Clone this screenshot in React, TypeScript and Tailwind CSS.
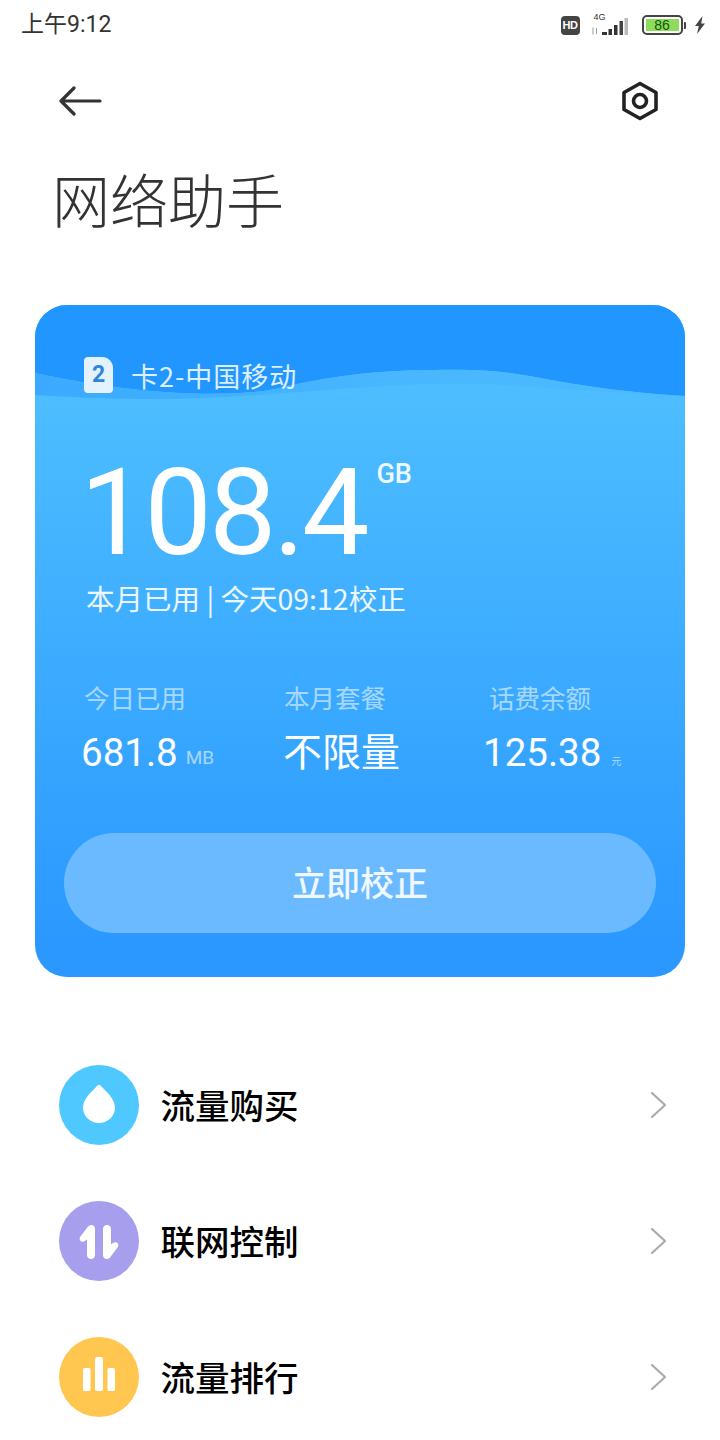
const ROWS = [
  { label: "流量购买", color: "bg-[#4FC8FF]", icon: "drop" },
  { label: "联网控制", color: "bg-[#A79EEE]", icon: "arrows" },
  { label: "流量排行", color: "bg-[#FFC650]", icon: "bars" },
];

const ARROW_PATH =
  "M32 24c2.500 0 4 1.600 4 4v26c0 2.400-1.800 4-4 4s-4-1.600-4-4V38.500l-2 1.500c-1.600 1.200-3.800 1-4.800-.6-1-1.500-.6-3.300.8-4.600L29 25.500c.9-1 1.900-1.500 3-1.500z";

function RowIcon({ icon }: { icon: string }) {
  if (icon === "drop") {
    return (
      <svg width="80" height="80" viewBox="0 0 80 80" fill="#fff">
        <path d="M40 20c1 0 1.800.6 2.500 1.400 3.500 3.900 13.500 12 13.500 21.100C56 51.100 49 58 40 58s-16-6.900-16-15.500c0-9.100 10-17.200 13.500-21.100.7-.8 1.500-1.400 2.500-1.400z" />
      </svg>
    );
  }
  if (icon === "arrows") {
    return (
      <svg width="80" height="80" viewBox="0 0 80 80" fill="#fff">
        <path d={ARROW_PATH} />
        <path d={ARROW_PATH} transform="rotate(180 40 41)" />
      </svg>
    );
  }
  return (
    <svg width="80" height="80" viewBox="0 0 80 80" fill="#fff">
      <rect x="24" y="31" width="7.500" height="23" rx="1.500" />
      <rect x="36" y="20" width="8" height="34" rx="2" />
      <rect x="48.500" y="31" width="7.500" height="23" rx="1.500" />
    </svg>
  );
}

function StatusIcons() {
  return (
    <div className="flex items-center">
      <div className="flex h-[19px] w-[19px] items-center justify-center rounded-[4px] bg-[#444] font-['Liberation_Sans',sans-serif] text-[11px] font-bold tracking-[-0.5px] text-white">
        HD
      </div>
      <div className="relative ml-[12px] h-[24px] w-[38px]">
        <span className="absolute left-[2px] top-[-2px] font-['Liberation_Sans',sans-serif] text-[9px] leading-[12px] text-[#333]">
          4G
        </span>
        <svg width="38" height="24" viewBox="0 0 38 24" className="absolute inset-0">
          <path d="M1 14.500v7M4.500 15v6" stroke="#999" strokeWidth="1" />
          <path d="M10 21v-1h5v3h-5zM16.500 23v-6h3.500v6zM22 23v-10h3.500v10z" fill="#333" transform="translate(0 -1)" />
          <rect x="27.500" y="8" width="3.500" height="14" fill="#444" />
          <rect x="32.500" y="5" width="3.500" height="17" fill="#bbb" />
        </svg>
      </div>
      <div className="ml-[12px] flex h-[20px] w-[41px] items-center rounded-[5px] border-[2.500px] border-[#444] p-[2px]">
        <div className="flex h-full w-full items-center justify-center bg-[#8FDC5A] font-['Liberation_Sans',sans-serif] text-[14px] leading-none text-[#0c5a10]">
          86
        </div>
      </div>
      <div className="ml-[1px] h-[7px] w-[2.500px] rounded-r-[1px] bg-[#444]" />
      <svg width="12" height="18" viewBox="0 0 12 18" fill="#444" className="ml-[8px]">
        <path d="M8.500 0 1 10h3.800L3 18l8-10.500H7.200z" />
      </svg>
    </div>
  );
}

export default function App() {
  return (
    <div className="h-[1440px] w-[720px] overflow-hidden bg-white font-['Noto_Sans_CJK_SC','Noto_Sans',sans-serif]">
      <div className="flex h-[50px] items-center justify-between pl-[21px] pr-[14px]">
        <span className="font-['Roboto','Noto_Sans_CJK_SC',sans-serif] text-[23px] text-[#333]">上午9:12</span>
        <StatusIcons />
      </div>

      <div className="mt-[22px] flex h-[58px] items-center justify-between pl-[59px] pr-[61px]">
        <svg width="44" height="30" viewBox="0 0 44 30" fill="none" stroke="#333" strokeWidth="3.200" strokeLinecap="round" strokeLinejoin="round">
          <path d="M41 15H3M15 2 2 15l13 13" />
        </svg>
        <svg width="38" height="40" viewBox="0 0 38 40" fill="none" stroke="#222" strokeWidth="3.600" strokeLinejoin="round">
          <path d="M19 2.500 35 11.500v17L19 37.500 3 28.500v-17z" />
          <circle cx="19" cy="20" r="6.500" />
        </svg>
      </div>

      <h1 className="ml-[52px] mt-[25px] text-[58px] font-light leading-[86px] text-[#333]">网络助手</h1>

      <div className="relative mx-[35px] mt-[64px] h-[672px] overflow-hidden rounded-[32px] bg-linear-to-b from-[#4DBDFF] from-[14%] to-[#2A98FF] to-[95%]">
        <svg width="650" height="100" viewBox="0 0 650 100" className="absolute left-0 top-0">
          <defs>
            <linearGradient id="midWave" x1="0" y1="0" x2="1" y2="0">
              <stop offset="0" stopColor="#3BA9FF" />
              <stop offset="0.55" stopColor="#48B7FF" />
              <stop offset="1" stopColor="#4BBAFF" />
            </linearGradient>
          </defs>
          <path d="M0 0H650V91C600 88 550 82 500 72 470 66 440 64 400 65 340 65 290 72 240 84 200 92 110 92 0 68z" fill="#2196FF" />
          <path d="M0 68C110 92 200 92 240 84 290 72 340 65 400 65 440 64 470 66 500 72 550 82 600 88 650 91 600 90 540 84 470 80 400 76 330 82 250 88 170 95 100 96 0 90z" fill="url(#midWave)" />
        </svg>

        <div className="relative flex h-full flex-col pl-[49px] text-white">
          <div className="mt-[52px] flex h-[36px] items-center">
            <div className="flex h-[36px] w-[29px] items-center justify-center rounded-[4px] rounded-tr-[11px] bg-[#E3F2FD] font-['Roboto',sans-serif] text-[23px] font-bold text-[#2F86D8]">
              2
            </div>
            <span className="ml-[18px] text-[27px] leading-none tracking-[1px] text-white/85">卡2-中国移动</span>
          </div>

          <div className="ml-[-4px] mt-[65px] flex h-[110px] items-start">
            <span className="font-['Roboto',sans-serif] text-[120px] font-normal leading-[110px] tracking-[-3px]">108.4</span>
            <span className="ml-[10px] mt-[-2px] font-['Roboto',sans-serif] text-[27px] font-medium leading-[36px] text-white/90">GB</span>
          </div>

          <div className="ml-[2px] mt-[7px] text-[28.500px] leading-[46px] text-white/90">本月已用 | 今天09:12校正</div>

          <div className="mt-[57px] flex">
            <div className="w-[200px]">
              <div className="text-[25.500px] leading-[38px] text-white/55">今日已用</div>
              <div className="ml-[-3px] mt-[12px] flex h-[50px] items-center">
                <span className="font-['Roboto',sans-serif] text-[38.500px]">681.8</span>
                <span className="ml-[8px] mt-[10px] font-['Roboto',sans-serif] text-[19px] text-white/55">MB</span>
              </div>
            </div>
            <div className="w-[205px]">
              <div className="text-[25.500px] leading-[38px] text-white/55">本月套餐</div>
              <div className="ml-[-1px] mt-[8px] flex h-[50px] items-center text-[39px]">不限量</div>
            </div>
            <div>
              <div className="text-[25.500px] leading-[38px] text-white/55">话费余额</div>
              <div className="ml-[-6px] mt-[12px] flex h-[50px] items-center">
                <span className="font-['Roboto',sans-serif] text-[38.500px]">125.38</span>
                <span className="ml-[10px] mt-[14px] text-[10px] text-white/60">元</span>
              </div>
            </div>
          </div>
        </div>

        <button className="absolute bottom-[44px] left-[29px] flex h-[100px] w-[592px] items-center justify-center rounded-full bg-[#6BBAFF] pb-[4px] text-[34px] font-medium text-white/90">
          立即校正
        </button>
      </div>

      <div className="mt-[88px] flex flex-col gap-[56px] pl-[59px] pr-[53px]">
        {ROWS.map((row) => (
          <div key={row.label} className="flex h-[80px] items-center">
            <div className={`h-[80px] w-[80px] rounded-full ${row.color}`}>
              <RowIcon icon={row.icon} />
            </div>
            <span className="ml-[21.500px] flex-1 text-[34.500px] font-medium text-black">{row.label}</span>
            <svg width="17" height="28" viewBox="0 0 17 28" fill="none" stroke="#aaa" strokeWidth="2.200" strokeLinecap="round" strokeLinejoin="round">
              <path d="M2 2l13 12L2 26" />
            </svg>
          </div>
        ))}
      </div>
    </div>
  );
}
